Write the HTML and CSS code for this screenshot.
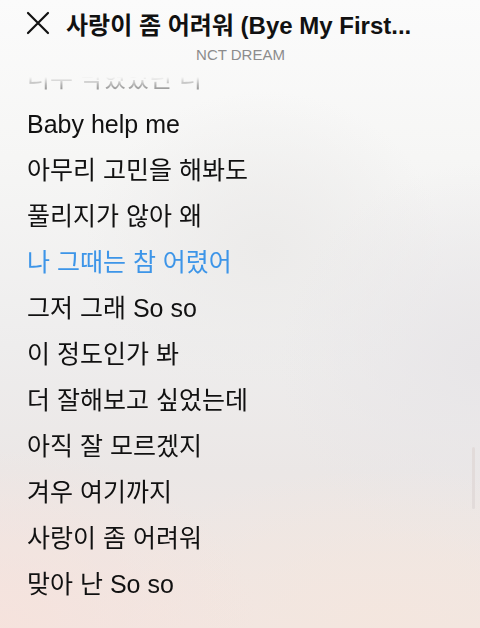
FILE: index.html
```html
<!DOCTYPE html>
<html lang="ko">
<head>
  <meta charset="UTF-8">
  <title>사랑이 좀 어려워 - Lyrics</title>
  <link rel="stylesheet" href="styles.css">
</head>
<body>
  <div class="screen">
    <header class="top">
      <div class="title-row">
        <button class="close" aria-label="Close">
          <svg width="24" height="24" viewBox="0 0 24 24">
            <path d="M2 2 L22 22 M22 2 L2 22" stroke="#111" stroke-width="2.2" stroke-linecap="round" fill="none"/>
          </svg>
        </button>
        <h1>사랑이 좀 어려워 (Bye My First...</h1>
      </div>
      <p class="artist">NCT DREAM</p>
    </header>

    <div class="lyrics">
      <ul class="lines">
        <li>너무 막혔었던 너</li>
        <li>Baby help me</li>
        <li>아무리 고민을 해봐도</li>
        <li>풀리지가 않아 왜</li>
        <li class="current">나 그때는 참 어렸어</li>
        <li>그저 그래 So so</li>
        <li>이 정도인가 봐</li>
        <li>더 잘해보고 싶었는데</li>
        <li>아직 잘 모르겠지</li>
        <li>겨우 여기까지</li>
        <li>사랑이 좀 어려워</li>
        <li>맞아 난 So so</li>
      </ul>
    </div>

    <div class="scrollbar"></div>
  </div>
</body>
</html>
```

FILE: styles.css
```css
* {
  box-sizing: border-box;
}

html, body {
  margin: 0;
  height: 100%;
}

body {
  font-family: "Liberation Sans", "Noto Sans CJK KR", sans-serif;
  color: #111;
  background: #f4f2f1;
  overflow: hidden;
}

.screen {
  position: relative;
  height: 628px;
  display: flex;
  flex-direction: column;
  background:
    radial-gradient(ellipse 260px 180px at 0% 100%, rgba(246, 226, 220, 0.9), rgba(246, 226, 220, 0) 100%),
    radial-gradient(ellipse 300px 160px at 80% 100%, rgba(244, 230, 222, 0.9), rgba(244, 230, 222, 0) 100%),
    radial-gradient(ellipse 200px 200px at 100% 58%, rgba(232, 230, 232, 1), rgba(232, 230, 232, 0) 100%),
    radial-gradient(ellipse 180px 160px at 55% 40%, rgba(236, 235, 234, 1), rgba(236, 235, 234, 0) 100%),
    linear-gradient(180deg, #fbfbfb 0%, #f6f6f5 25%, #eeeded 55%, #ebe7e6 75%, #f1e6e2 100%);
}

/* header */
.top {
  padding: 10px 0 0;
}

.title-row {
  display: flex;
  align-items: center;
  gap: 16px;
  padding-left: 26px;
  height: 26px;
}

.close {
  width: 24px;
  height: 24px;
  padding: 0;
  border: none;
  background: none;
  display: flex;
}

h1 {
  margin: 0;
  font-size: 24px;
  font-weight: bold;
  white-space: nowrap;
}

.artist {
  margin: 10px 0 0;
  text-align: center;
  font-size: 15px;
  color: #8c8c8c;
  padding-left: 1px;
}

/* lyrics */
.lyrics {
  margin-top: 14px;
  flex: 1;
  overflow: hidden;
  -webkit-mask-image: linear-gradient(180deg, transparent 0, rgba(0,0,0,0.3) 8px, rgba(0,0,0,0.45) 14px, #000 30px);
  mask-image: linear-gradient(180deg, transparent 0, rgba(0,0,0,0.3) 8px, rgba(0,0,0,0.45) 14px, #000 30px);
}

.lines {
  list-style: none;
  margin: -22px 0 0;
  padding: 0 0 0 27px;
}

.lines li {
  height: 46px;
  line-height: 46px;
  font-size: 25px;
  white-space: nowrap;
}

.lines li.current {
  color: #3d95e8;
}

.scrollbar {
  position: absolute;
  right: 5px;
  top: 447px;
  width: 3px;
  height: 62px;
  border-radius: 2px;
  background: #e2dbda;
}
```
